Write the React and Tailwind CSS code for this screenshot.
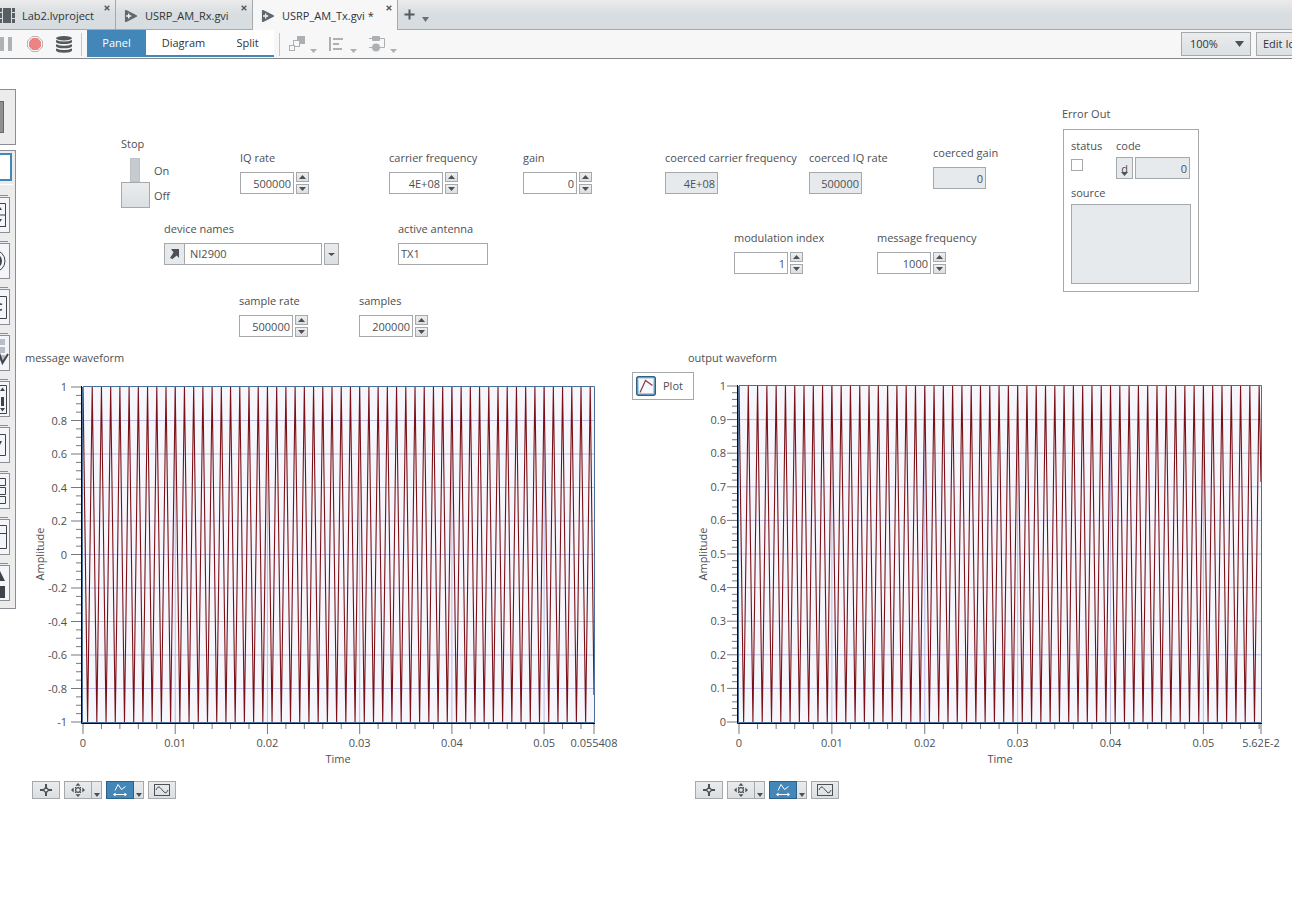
import React, { useId } from "react";

const INK = "#4d5054";

/* ---------- top bar ---------- */

function ViIcon() {
  return (
    <svg width="14" height="14" viewBox="0 0 15 14">
      <path d="M2 1.5 L13 7 L2 12.5 Z" fill="#5f6770" stroke="#5f6770" strokeWidth="2" strokeLinejoin="round" />
      <path d="M5 4.2 V9.8 M2.2 7 H7.8" stroke="#f4f4f4" strokeWidth="1.4" />
    </svg>
  );
}

function ProjectIcon() {
  return (
    <svg width="15" height="15" viewBox="0 0 15 15" fill="#575e64">
      <rect x="3" y="0" width="8" height="15" />
      <path d="M0 0h2v4H0zM0 5h2v5H0zM0 11h2v4H0zM12 0h3v4h-3zM12 5h3v5h-3zM12 11h3v4h-3z" />
    </svg>
  );
}

function CloseIcon() {
  return (
    <svg width="6" height="6" viewBox="0 0 6 6">
      <path d="M0.7 0.7 L5.3 5.3 M5.3 0.7 L0.7 5.3" stroke="#55595c" strokeWidth="1.4" />
    </svg>
  );
}

function Caret({ fill = "#6b6f72", w = 7, h = 4 }) {
  return (
    <svg width={w} height={h} viewBox="0 0 8 5" preserveAspectRatio="none">
      <path d="M0 0 H8 L4 5 Z" fill={fill} />
    </svg>
  );
}

function Tab({ icon, title, active, className }) {
  return (
    <div
      className={`flex shrink-0 justify-between border-r border-[#a5a9ac] pr-[5px] ${
        active ? "h-[30px] bg-[#f7f7f7]" : "h-[29px]"
      } ${className}`}
    >
      <button className="flex items-center gap-[7px] pt-0.5 whitespace-nowrap text-[#2f3338]">
        {icon}
        {title}
      </button>
      <button aria-label={`Close ${title}`} className="flex h-[15px] items-center">
        <CloseIcon />
      </button>
    </div>
  );
}

function TabBar() {
  return (
    <div className="flex h-[30px] items-start border-b border-[#a5a9ac] bg-linear-to-b from-[#ebebec] to-[#d7dde0] to-50%">
      <Tab icon={<ProjectIcon />} title="Lab2.lvproject" className="w-[116px]" />
      <Tab icon={<ViIcon />} title="USRP_AM_Rx.gvi" className="w-[137px] pl-2" />
      <Tab icon={<ViIcon />} title="USRP_AM_Tx.gvi *" active className="w-[145px] pl-2" />
      <button aria-label="New tab" className="flex h-[29px] items-center pl-1.5">
        <svg width="11" height="11" viewBox="0 0 11 11">
          <path d="M5.5 0.5 V10.5 M0.5 5.5 H10.5" stroke="#55595c" strokeWidth="2" />
        </svg>
      </button>
      <button aria-label="Tab list" className="flex h-[29px] items-center pt-2.5 pl-[7px]">
        <Caret w={7} h={5} />
      </button>
    </div>
  );
}

function ToolMenu({ label, children }) {
  return (
    <button aria-label={label} className="flex h-[18px] w-10 items-end gap-1">
      {children}
      <Caret fill="#adb0b2" w={7} h={4} />
    </button>
  );
}

function Toolbar() {
  return (
    <div className="flex h-[29px] items-center overflow-hidden border-b border-[#85888b] bg-[#f7f7f7]">
      <button aria-label="Pause" className="w-[27px]">
        <svg width="13" height="14" viewBox="0 0 13 14" fill="#aeb2b5">
          <rect x="0" y="0" width="4" height="14" />
          <rect x="8" y="0" width="4" height="14" />
        </svg>
      </button>
      <button aria-label="Abort" className="w-[29px]">
        <svg width="16" height="16" viewBox="0 0 16 16">
          <path d="M5 0.6 H11 L15.4 5 V11 L11 15.4 H5 L0.6 11 V5 Z" fill="#fff" stroke="#a9aeb2" />
          <path d="M5.4 2 H10.6 L14 5.4 V10.6 L10.6 14 H5.4 L2 10.6 V5.4 Z" fill="#ee8384" />
        </svg>
      </button>
      <button aria-label="Data" className="w-[25px]">
        <svg width="16" height="17" viewBox="0 0 16 17" fill="#55595c">
          <ellipse cx="8" cy="2.2" rx="8" ry="2.2" />
          <path d="M0 4 Q8 7 16 4 V6 Q15 8 8 8 Q1 8 0 6Z M0 8.3 Q8 11.3 16 8.3 V10.3 Q15 12.3 8 12.3 Q1 12.3 0 10.3Z M0 12.6 Q8 15.6 16 12.6 V14.6 Q15 16.8 8 16.8 Q1 16.8 0 14.6Z" />
        </svg>
      </button>
      <div className="mr-[5px] h-[23px] w-px bg-[#c3c5c7]" />
      <div className="flex h-[27px] self-start text-[#2f3338]">
        <button className="w-[59px] border-b-2 border-[#4387b9] bg-[#4387b9] text-white">Panel</button>
        <button className="w-[75px] border-b-2 border-[#4387b9] bg-white">Diagram</button>
        <button className="w-[53px] border-b-2 border-[#4387b9] bg-white">Split</button>
      </div>
      <div className="mr-[9px] ml-[5px] h-[23px] w-px bg-[#c3c5c7]" />
      <ToolMenu label="Reorder">
        <svg width="17" height="17" viewBox="0 0 17 17">
          <rect x="8" y="0" width="8" height="8" fill="#adb0b2" />
          <rect x="4.5" y="4.5" width="6" height="6" fill="#f7f7f7" stroke="#adb0b2" />
          <rect x="0.5" y="9.5" width="5" height="5" fill="#f7f7f7" stroke="#adb0b2" />
        </svg>
      </ToolMenu>
      <ToolMenu label="Align">
        <svg width="17" height="17" viewBox="0 0 17 17" stroke="#adb0b2" strokeWidth="2">
          <path d="M1 1 V15 M4 3 H14 M4 8 H10 M4 13 H13" />
        </svg>
      </ToolMenu>
      <ToolMenu label="Distribute">
        <svg width="17" height="17" viewBox="0 0 17 17" fill="#adb0b2">
          <path d="M0 2.5 H15.5 V11.5 H0" fill="none" stroke="#adb0b2" />
          <rect x="3" y="0" width="8" height="5" rx="1" />
          <circle cx="7" cy="11.5" r="4" />
        </svg>
      </ToolMenu>
      <div className="ml-auto flex items-center gap-[5px] text-[#2f3338]">
        <div className="grid items-center">
          <select
            aria-label="Zoom"
            defaultValue="100%"
            className="col-start-1 row-start-1 h-6 w-[70px] appearance-none border border-[#a5a9ac] bg-linear-to-b from-[#ebebec] to-[#dbe0e3] pl-2"
          >
            <option>100%</option>
          </select>
          <span className="pointer-events-none col-start-1 row-start-1 mr-[7px] justify-self-end">
            <Caret fill="#4d5054" w={9} h={6} />
          </span>
        </div>
        <button className="h-6 w-9 overflow-hidden border border-r-0 border-[#a5a9ac] bg-linear-to-b from-[#ebebec] to-[#dbe0e3] pl-1.5 text-left whitespace-nowrap">
          Edit Icon
        </button>
      </div>
    </div>
  );
}

/* ---------- palette ---------- */

const PALETTE = [
  ["Numeric", <><path d="M-1 6.5 H5.5 V30 M-1 18 H6 M5.5 29.5 H-1" /><path d="M-2 13 L0 10 L2 13Z M-2 22 L0 25 L2 22Z" fill="#3f434a" stroke="none" /></>],
  ["Boolean", <><circle cx="-6" cy="18" r="11" /><circle cx="-6" cy="18" r="8" fill="#3f434a" stroke="none" /></>],
  ["String", <><path d="M-1 7.5 H6.5 V29.5 H-1" /><path d="M2 15.5 Q-1 14 -1.5 18 Q-1 22 2 20.5" strokeWidth="1.5" /></>],
  ["Data grid", <><path d="M0 4h5v6H0zM0 12h5v6H0zM0 20h5v6H0z" fill="#b8bec8" stroke="none" /><path d="M-1 18 L2.5 28 L8 19" strokeWidth="2" /></>],
  ["Slider", <><path d="M-1 4.5 H6.5 V32.5 H-1" /><path d="M0 10 L2.5 6.5 L5 10Z M0 27 L2.5 30.5 L5 27Z M1 16h3v9H1z" fill="#3f434a" stroke="none" /></>],
  ["Enum", <><path d="M-1 7.5 H5.5 V28.5 H-1" /><path d="M-2 14 H2 L0 18Z" fill="#3f434a" stroke="none" /></>],
  ["Array", <path d="M-1 5.5 H5.5 V12.5 H-1 M-1 14.5 H5.5 V21.5 H-1 M-1 23.5 H5.5 V30.5 H-1" />],
  ["Layout", <path d="M-1 6.5 H6.5 V29.5 H-1 M-1 14.5 H6" />],
  ["Decorations", <path d="M-5 16 L0 6 L5 16Z M-1 21 H5 V33 H-1Z" fill="#3f434a" stroke="none" />],
];

function Palette() {
  return (
    <nav aria-label="Palette" className="flex w-4 shrink-0 flex-col gap-[5px] pt-[30px]">
      <div className="h-14 border border-l-0 border-[#8b8e92] bg-[#ececec] pt-[11px]">
        <button aria-label="Pointer" className="block h-8 w-1 border border-l-0 border-[#66686a] bg-[#8f8f8f]" />
      </div>
      <div className="border border-l-0 border-[#8b8e92] bg-[#ececec] pt-0.5 pb-[7px]">
        <button aria-label="Search" className="block h-7 w-3 border-2 border-l-0 border-[#4387b9] bg-white" />
        <div className="mt-[3px] mb-2.5 h-px w-[13px] bg-white" />
        <div className="flex flex-col gap-2">
          {PALETTE.map(([name, icon]) => (
            <div key={name} className="flex flex-col gap-px">
              <div className="h-px w-2 bg-[#8b8e92]" />
              <button
                aria-label={name}
                className="block h-9 w-2.5 overflow-hidden border border-l-0 border-[#8b8e92] bg-[#f3f5f9]"
              >
                <svg width="9" height="34" viewBox="0 1 9 34" fill="none" stroke="#3f434a">
                  {icon}
                </svg>
              </button>
            </div>
          ))}
        </div>
      </div>
    </nav>
  );
}

/* ---------- controls ---------- */

function Field({ label, className, children }) {
  const id = useId();
  return (
    <div className={`flex shrink-0 flex-col gap-1.5 ${className}`}>
      <label htmlFor={id} className="whitespace-nowrap">
        {label}
      </label>
      {children(id)}
    </div>
  );
}

function StepButton({ up, label }) {
  return (
    <button
      aria-label={label}
      className="flex h-2.5 w-[13px] items-center justify-center border border-[#a5a9ac] bg-linear-to-b from-[#eeeeee] to-[#dbdfe2]"
    >
      <svg width="7" height="4" viewBox="0 0 7 4">
        <path d={up ? "M0 4 H7 L3.5 0Z" : "M0 0 H7 L3.5 4Z"} fill={INK} />
      </svg>
    </button>
  );
}

function NumberControl({ label, value, className }) {
  return (
    <Field label={label} className={className}>
      {(id) => (
        <div className="flex gap-0.5">
          <input
            id={id}
            defaultValue={value}
            className="h-[22px] w-[54px] border border-[#a5a9ac] bg-white pr-0.5 text-right"
          />
          <div className="flex flex-col gap-0.5">
            <StepButton up label={`Increase ${label}`} />
            <StepButton label={`Decrease ${label}`} />
          </div>
        </div>
      )}
    </Field>
  );
}

function Indicator({ label, value, className }) {
  return (
    <Field label={label} className={className}>
      {(id) => (
        <input
          id={id}
          readOnly
          value={value}
          className="h-[22px] w-[53px] border border-[#a5a9ac] bg-[#e6eaed] pr-0.5 text-right"
        />
      )}
    </Field>
  );
}

function StopSwitch() {
  return (
    <div className="w-[119px] shrink-0">
      <div id="stop-label">Stop</div>
      <div className="mt-1.5 flex gap-1">
        <button role="switch" aria-checked="false" aria-labelledby="stop-label" className="flex w-[29px] flex-col items-start">
          <span className="ml-[9px] h-6 w-2.5 border border-[#bcc1c4] bg-[#c6cbcf]" />
          <span className="h-[26px] w-full border border-[#a5a9ac] bg-linear-to-b from-[#ebebec] to-[#dbdfe2]" />
        </button>
        <div className="flex flex-col gap-[9px] pt-[5px]">
          <span>On</span>
          <span>Off</span>
        </div>
      </div>
    </div>
  );
}

function ErrorOut() {
  return (
    <section className="shrink-0 pt-[47px]">
      <h2>Error Out</h2>
      <div className="mt-[7px] ml-px flex h-[163px] w-[136px] flex-col border border-[#a5a9ac] px-[7px] pt-2 pb-[7px]">
        <div className="flex gap-3.5">
          <div className="flex w-[31px] flex-col gap-[5px]">
            <label htmlFor="err-status">status</label>
            <input id="err-status" type="checkbox" className="size-3 appearance-none border border-[#a5a9ac] bg-white" />
          </div>
          <div className="flex flex-col gap-[3px]">
            <label htmlFor="err-code">code</label>
            <div className="flex gap-0.5">
              <button
                aria-label="Radix decimal"
                className="flex h-[22px] w-[17px] flex-col items-center border border-[#a5a9ac] bg-[#e6eaed] pt-[5px]"
              >
                <span className="h-[9px] leading-3">d</span>
                <Caret fill={INK} w={7} h={4} />
              </button>
              <input
                id="err-code"
                readOnly
                value="0"
                className="h-[22px] w-[55px] border border-[#a5a9ac] bg-[#e6eaed] pr-0.5 text-right"
              />
            </div>
          </div>
        </div>
        <label htmlFor="err-source" className="mt-1.5">
          source
        </label>
        <textarea
          id="err-source"
          readOnly
          className="mt-[3px] h-20 w-[120px] shrink-0 resize-none border border-[#a5a9ac] bg-[#e6eaed]"
        />
      </div>
    </section>
  );
}

function Controls() {
  return (
    <div className="flex h-[291px] items-start">
      <div className="flex w-[1046px] shrink-0 flex-col pt-[77px]">
        <div className="flex pl-[105px]">
          <StopSwitch />
          <NumberControl label="IQ rate" value="500000" className="mt-3.5 w-[149px]" />
          <NumberControl label="carrier frequency" value="4E+08" className="mt-3.5 w-[134px]" />
          <NumberControl label="gain" value="0" className="mt-3.5 w-[142px]" />
          <Indicator label="coerced carrier frequency" value="4E+08" className="mt-3.5 w-[144px]" />
          <Indicator label="coerced IQ rate" value="500000" className="mt-3.5 w-[124px]" />
          <Indicator label="coerced gain" value="0" className="mt-[9px] w-[110px]" />
        </div>
        <div className="mt-[13px] flex pl-[148px]">
          <Field label="device names" className="w-[234px]">
            {(id) => (
              <div className="flex h-[22px]">
                <span className="flex w-5 items-center justify-center border border-r-0 border-[#a5a9ac] bg-[#e6eaed]">
                  <svg width="9" height="10" viewBox="0 0 9 10" fill={INK}>
                    <path d="M1 0 H9 V9 L6.8 6.4 L2.5 10 L0 9 L3.5 3.5 Z" />
                  </svg>
                </span>
                <input id={id} defaultValue="NI2900" className="w-[138px] border border-[#a5a9ac] bg-white pl-[5px]" />
                <button
                  aria-label="Choose device"
                  className="ml-0.5 flex w-[15px] items-center justify-center border border-[#a5a9ac] bg-linear-to-b from-[#ebebec] to-[#dbdfe2]"
                >
                  <Caret fill={INK} w={7} h={3} />
                </button>
              </div>
            )}
          </Field>
          <Field label="active antenna" className="w-[336px]">
            {(id) => (
              <input id={id} defaultValue="TX1" className="h-[22px] w-[90px] border border-[#a5a9ac] bg-white pb-0.5 pl-0.5" />
            )}
          </Field>
          <NumberControl label="modulation index" value="1" className="mt-[9px] w-[143px]" />
          <NumberControl label="message frequency" value="1000" className="mt-[9px] w-[143px]" />
        </div>
        <div className="mt-[19px] flex pl-[223px]">
          <NumberControl label="sample rate" value="500000" className="w-[120px]" />
          <NumberControl label="samples" value="200000" className="w-[120px]" />
        </div>
      </div>
      <ErrorOut />
    </div>
  );
}

/* ---------- graphs ---------- */

function range(n) {
  return Array.from({ length: n }, (_, i) => i);
}

function Graph({ viewBox, x0, x1, y0, y1, tEnd, endY, endLabel, yMax, yMin, majors, minors, yLabelX, ampX, timeX, name }) {
  const sx = (x1 - x0) / tEnd;
  const majorGap = (y1 - y0) / majors;
  const minorGap = majorGap / minors;
  const halfCycles = Math.floor(tEnd / 0.0005);
  // The trace is decimated to the extremes of each cycle.
  const points = range(halfCycles + 1)
    .filter((i) => i % 2 === 1 || i < halfCycles || x1 - x0 - i * 0.0005 * sx > 0)
    .map((i) => `${(x0 + i * 0.0005 * sx).toFixed(2)},${i % 2 === 0 ? y0 : y1}`)
    .concat(`${x1},${endY}`)
    .join(" ");
  const xMinor = range(Math.floor(tEnd / 0.002) + 1).map((i) => x0 + i * 0.002 * sx);
  return (
    <svg viewBox={viewBox} className="w-full min-w-0 flex-1" fontSize="11" fill={INK} role="img" aria-label={name}>
      <rect x={x0} y={y0} width={x1 - x0} height={y1 - y0} fill="#f5f7fc" />
      <g stroke="#bcbce8">
        {range(majors - 1).map((i) => (
          <line key={i} x1={x0} x2={x1} y1={y0 + (i + 1) * majorGap} y2={y0 + (i + 1) * majorGap} />
        ))}
        {range(5).map((i) => (
          <line key={i} x1={x0 + (i + 1) * 0.01 * sx} x2={x0 + (i + 1) * 0.01 * sx} y1={y0} y2={y1} />
        ))}
      </g>
      <polyline points={points} fill="none" stroke="#7b1016" strokeWidth="1.1" strokeLinejoin="bevel" />
      <path d={`M${x0} ${y0 - 0.5} H${x1 + 0.5} V${y1 + 0.5} H${x0 - 0.5} V${y0}`} fill="none" stroke="#4a6f98" />
      <path d={`M${x0 - 1.5} ${y0 - 1} V${y1 + 1.5} H${x1 + 1}`} fill="none" stroke="#05070b" />
      <g stroke="#77797c">
        {range(majors * minors + 1).map((i) => (
          <line key={i} x1={i % minors === 0 ? x0 - 12 : x0 - 7} x2={x0 - 2} y1={y0 + i * minorGap} y2={y0 + i * minorGap} />
        ))}
        {xMinor.map((x, i) => (
          <line key={i} x1={x} x2={x} y1={y1 + 2} y2={i % 5 === 0 ? y1 + 12 : y1 + 7} />
        ))}
        <line x1={x1} x2={x1} y1={y1 + 2} y2={y1 + 12} />
      </g>
      {range(majors + 1).map((i) => (
        <text key={i} x={yLabelX} y={y0 + i * majorGap + 4} textAnchor="end">
          {String(Math.round((yMax - (i * (yMax - yMin)) / majors) * 10) / 10)}
        </text>
      ))}
      {range(6).map((i) => (
        <text key={i} x={x0 + i * 0.01 * sx} y={y1 + 25} textAnchor="middle">
          {String(i / 100)}
        </text>
      ))}
      <text x={x1} y={y1 + 25} textAnchor="middle">
        {endLabel}
      </text>
      <text x={timeX} y={y1 + 41} textAnchor="middle">
        Time
      </text>
      <text transform={`translate(${ampX} 554) rotate(-90)`} textAnchor="middle">
        Amplitude
      </text>
    </svg>
  );
}

function GraphButton({ label, on, children }) {
  return (
    <button
      aria-label={label}
      className={`flex h-[18px] w-7 items-center justify-center border ${
        on ? "border-[#2c6088] bg-[#4387b9]" : "border-[#a5a9ac] bg-linear-to-b from-[#ebebec] to-[#dbdfe2]"
      }`}
    >
      {children}
    </button>
  );
}

function GraphDrop({ label }) {
  return (
    <button
      aria-label={label}
      className="flex h-[18px] w-2.5 items-end justify-center border border-l-0 border-[#a5a9ac] bg-linear-to-b from-[#ebebec] to-[#dbdfe2] pb-px"
    >
      <Caret fill={INK} w={6} h={4} />
    </button>
  );
}

function GraphTools() {
  return (
    <div className="mt-[10px] flex gap-1 pl-4">
      <GraphButton label="Cursor">
        <svg width="14" height="12" viewBox="0 0 14 12" fill="none" stroke={INK}>
          <path d="M7 0 V3 M7 9 V12 M1 6 H4 M10 6 H13" strokeWidth="2" />
          <path d="M7 3.2 L9.8 6 L7 8.8 L4.2 6Z" strokeWidth="1.3" />
        </svg>
      </GraphButton>
      <div className="flex">
        <GraphButton label="Pan">
          <svg width="14" height="14" viewBox="0 0 14 14" fill={INK}>
            <path d="M4.5 2.7 L7 0 L9.5 2.7Z M4.5 11.3 L7 14 L9.5 11.3Z M2.7 4.5 L0 7 L2.7 9.5Z M11.3 4.5 L14 7 L11.3 9.5Z" />
            <circle cx="7" cy="7" r="2.4" fill="none" stroke={INK} strokeWidth="1.2" />
            <path d="M4 4l1 1M10 4l-1 1M4 10l1-1M10 10l-1-1" stroke={INK} />
          </svg>
        </GraphButton>
        <GraphDrop label="Pan options" />
      </div>
      <div className="flex">
        <GraphButton label="Autoscale X" on>
          <svg width="14" height="14" viewBox="0 0 14 14" fill="none" stroke="#fff">
            <path d="M2 7.5 L5 1.5 L8.5 6.5 L12.5 3.5" />
            <path d="M1.5 11.5 H12.5" />
            <path d="M0 11.5 L2.5 9.5 V13.5Z M14 11.5 L11.5 9.5 V13.5Z" fill="#fff" stroke="none" />
          </svg>
        </GraphButton>
        <GraphDrop label="Autoscale options" />
      </div>
      <GraphButton label="Plot view">
        <svg width="16" height="12" viewBox="0 0 16 12" fill="none" stroke={INK}>
          <rect x="0.5" y="0.5" width="15" height="11" />
          <path d="M2 6 Q4 1.5 6 3.5 L10 8 Q12 10.5 14 6" />
        </svg>
      </GraphButton>
    </div>
  );
}

function Graphs() {
  return (
    <div className="grid grid-cols-[616fr_660fr] items-start">
      <section>
        <h2 className="pl-[9px]">message waveform</h2>
        <div className="mt-1.5 flex">
          <Graph
            name="message waveform"
            viewBox="16 372 616 399"
            x0={83} x1={594} y0={387} y1={722}
            tEnd={0.055408} endY={695} endLabel="0.055408"
            yMax={1} yMin={-1} majors={10} minors={4}
            yLabelX={67} ampX={44} timeX={338}
          />
        </div>
        <GraphTools />
      </section>
      <section>
        <h2 className="pl-14">output waveform</h2>
        <div className="mt-1.5 flex items-start">
          <button className="flex h-7 w-[62px] shrink-0 items-center gap-[7px] border border-[#a5a9ac] bg-white pl-[3px]">
            <svg width="20" height="20" viewBox="0 0 20 20">
              <defs>
                <linearGradient id="plot-swatch" x1="0" y1="0" x2="0" y2="1">
                  <stop offset="0" stopColor="#c9dcea" />
                  <stop offset="1" stopColor="#9ccbe9" />
                </linearGradient>
              </defs>
              <rect x="0.75" y="0.75" width="18.5" height="18.5" rx="2" fill="url(#plot-swatch)" stroke="#2f5f83" strokeWidth="1.5" />
              <rect x="3" y="3" width="14" height="14" fill="#f8f9fc" />
              <path d="M4 16.5 L9.5 4.5 L16.5 9.5" fill="none" stroke="#8d3a40" strokeWidth="1.2" />
            </svg>
            Plot
          </button>
          <Graph
            name="output waveform"
            viewBox="694 372 598 399"
            x0={739} x1={1261} y0={386} y1={722}
            tEnd={0.0562} endY={482} endLabel="5.62E-2"
            yMax={1} yMin={0} majors={10} minors={5}
            yLabelX={726} ampX={707} timeX={1000}
          />
        </div>
        <div className="pl-[47px]">
          <GraphTools />
        </div>
      </section>
    </div>
  );
}

export default function App() {
  return (
    <div className="min-h-screen overflow-x-hidden bg-white font-['Open_Sans',sans-serif] text-[11px] leading-4 text-[#4d5054]">
      <header>
        <TabBar />
        <Toolbar />
      </header>
      <div className="flex items-start">
        <Palette />
        <main className="min-w-0 flex-1">
          <Controls />
          <Graphs />
        </main>
      </div>
    </div>
  );
}
